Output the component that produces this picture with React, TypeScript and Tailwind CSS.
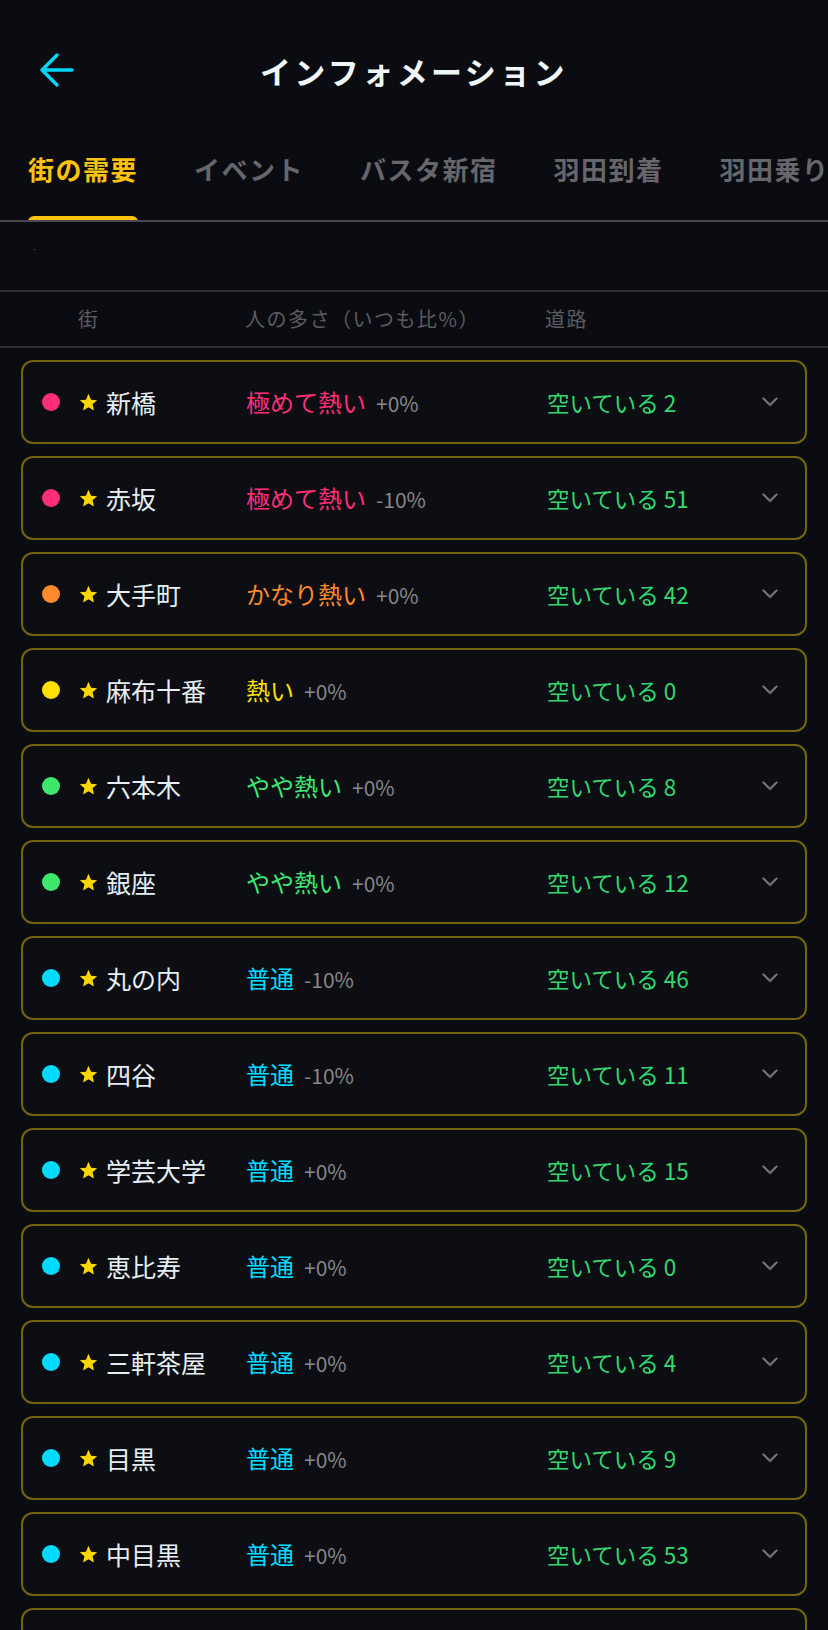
import React from "react";

type Row = { name: string; level: string; color: string; pct: string; road: string };

const PINK = "#ff2d7a";
const ORANGE = "#ff8a2e";
const YELLOW = "#ffe000";
const GREEN = "#3ee86e";
const CYAN = "#00dcff";

const rows: Row[] = [
  { name: "新橋", level: "極めて熱い", color: PINK, pct: "+0%", road: "空いている 2" },
  { name: "赤坂", level: "極めて熱い", color: PINK, pct: "-10%", road: "空いている 51" },
  { name: "大手町", level: "かなり熱い", color: ORANGE, pct: "+0%", road: "空いている 42" },
  { name: "麻布十番", level: "熱い", color: YELLOW, pct: "+0%", road: "空いている 0" },
  { name: "六本木", level: "やや熱い", color: GREEN, pct: "+0%", road: "空いている 8" },
  { name: "銀座", level: "やや熱い", color: GREEN, pct: "+0%", road: "空いている 12" },
  { name: "丸の内", level: "普通", color: CYAN, pct: "-10%", road: "空いている 46" },
  { name: "四谷", level: "普通", color: CYAN, pct: "-10%", road: "空いている 11" },
  { name: "学芸大学", level: "普通", color: CYAN, pct: "+0%", road: "空いている 15" },
  { name: "恵比寿", level: "普通", color: CYAN, pct: "+0%", road: "空いている 0" },
  { name: "三軒茶屋", level: "普通", color: CYAN, pct: "+0%", road: "空いている 4" },
  { name: "目黒", level: "普通", color: CYAN, pct: "+0%", road: "空いている 9" },
  { name: "中目黒", level: "普通", color: CYAN, pct: "+0%", road: "空いている 53" },
  { name: "渋谷", level: "普通", color: CYAN, pct: "+0%", road: "空いている 7" },
];

const tabs = ["街の需要", "イベント", "バスタ新宿", "羽田到着", "羽田乗り場"];

function Star() {
  return (
    <svg width="19" height="19" viewBox="0 0 24 24" className="shrink-0">
      <polygon
        points="12,1 15.2,8.4 23,9.1 17.1,14.3 18.9,22.2 12,18.1 5.1,22.2 6.9,14.3 1,9.1 8.8,8.4"
        fill="#ffd600"
      />
    </svg>
  );
}

function Chevron() {
  return (
    <svg width="16" height="10" viewBox="0 0 16 10" className="shrink-0">
      <polyline points="1.5,1.5 8,8 14.5,1.5" fill="none" stroke="#707076" strokeWidth="2.4" strokeLinecap="round" strokeLinejoin="round" />
    </svg>
  );
}

function Card({ r }: { r: Row }) {
  return (
    <div className="flex h-[84px] shrink-0 items-center rounded-[12px] border-2 border-[#74660c] bg-[#0d0e13] pl-[19px] pr-[27px]">
      <div className="flex w-[204px] items-center">
        <div className="h-[18px] w-[18px] shrink-0 rounded-full" style={{ backgroundColor: r.color }} />
        <div className="ml-[19px]">
          <Star />
        </div>
        <span className="ml-[8px] whitespace-nowrap text-[25px] leading-none text-[#e6eff3]">{r.name}</span>
      </div>
      <div className="flex w-[301px] items-baseline whitespace-nowrap">
        <span className="text-[24px] leading-none" style={{ color: r.color }}>
          {r.level}
        </span>
        <span className="ml-[10px] text-[21px] leading-none text-[#86868b]">{r.pct}</span>
      </div>
      <div className="flex-1 whitespace-nowrap text-[22.5px] leading-none text-[#34d86e]">{r.road}</div>
      <Chevron />
    </div>
  );
}

export default function App() {
  return (
    <div
      className="h-[1630px] w-full overflow-hidden bg-[#0b0c11]"
      style={{ fontFamily: '"Noto Sans CJK JP", "Noto Sans", sans-serif' }}
    >
      {/* Header */}
      <div className="mt-[40px] grid h-[60px] grid-cols-[1fr_auto_1fr] items-center">
        <div className="pl-[40px]">
          <svg width="34" height="34" viewBox="0 0 34 34">
            <path d="M17 2 L2 17 L17 32 M2 17 H32" fill="none" stroke="#00d6f7" strokeWidth="3.4" strokeLinecap="round" strokeLinejoin="round" />
          </svg>
        </div>
        <div className="whitespace-nowrap text-[31px] font-bold leading-none tracking-[3.4px] text-[#f1f7f9]">インフォメーション</div>
        <div />
      </div>

      {/* Tabs */}
      <div className="flex h-[122px] items-end gap-[56px] overflow-hidden whitespace-nowrap border-b-2 border-[#48484e] pl-[28px]">
        {tabs.map((t, i) => (
          <div key={t} className="relative shrink-0 pb-[33px]">
            <span
              className={
                "text-[26px] font-bold leading-[36px] tracking-[1.5px] " +
                (i === 0 ? "text-[#ffc20e]" : "text-[#66666c]")
              }
            >
              {t}
            </span>
            {i === 0 && (
              <div className="absolute bottom-[-2px] left-0 right-0 h-[6px] rounded-t-[6px] bg-[#ffc20e]" />
            )}
          </div>
        ))}
      </div>

      {/* Empty info area */}
      <div className="h-[70px] border-b-2 border-[#303036] pl-[34px] pt-[27px]">
        <div className="h-[1px] w-[1px] bg-[#55555a]" />
      </div>

      {/* Column header */}
      <div className="flex h-[56px] items-center border-b-2 border-[#303036] text-[20px] leading-none tracking-[1.5px] text-[#5c5c62]">
        <div className="w-[245px] pl-[78px]">街</div>
        <div className="w-[300px]">人の多さ（いつも比%）</div>
        <div>道路</div>
      </div>

      {/* Cards */}
      <div className="flex flex-col gap-[12px] px-[21px] pt-[12px]">
        {rows.map((r) => (
          <Card key={r.name} r={r} />
        ))}
      </div>
    </div>
  );
}
